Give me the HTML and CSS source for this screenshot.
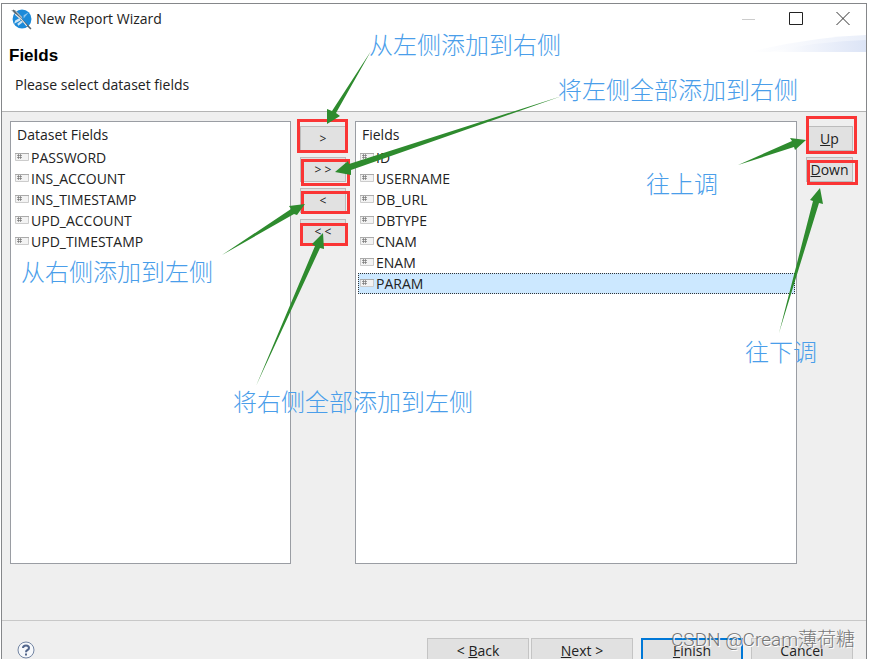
FILE: index.html
```
<!DOCTYPE html>
<html lang="en">
<head>
    <meta charset="UTF-8">
    <meta name="viewport" content="width=device-width, initial-scale=1.0">
    <title>New Report Wizard</title>

    <link rel="stylesheet" href="styles.css">
</head>
<body>

    <div class="wizard">
        <div class="title-bar">
            <svg class="logo" viewBox="0 0 20 20">
                <circle cx="10.500" cy="9.500" r="9" fill="#1c8ad9"/>
                <path d="M0 1L4 1L10 7L11 9L8 9z" fill="#a9b7c0"/>
                <path d="M9 8L4 11L3 14L9 11zM10 11L6 14L7 16L12 12z" fill="#cfe6f5"/>
                <path d="M17 3L12 6L12 9z" fill="#8fc6ee"/>
                <path d="M2 1L9 9L19 19" stroke="#55646e" stroke-width="1.500" fill="none"/>
                <path d="M4 5L10 10L15 16" stroke="#e8eef2" stroke-width="1" fill="none"/>
            </svg>
            <span class="title">New Report Wizard</span>
            <div class="window-buttons">
                <button aria-label="Minimize" disabled>
                    <svg viewBox="0 0 14 14"><path d="M0 7.500H13" stroke="#ccc"/></svg>
                </button>
                <button aria-label="Maximize">
                    <svg viewBox="0 0 14 14"><path d="M.5 .5H13.500V12.500H.5z" stroke="#222" fill="none"/></svg>
                </button>
                <button aria-label="Close">
                    <svg viewBox="0 0 14 14"><path d="M.5 0L13.500 13M13.500 0L.5 13" stroke="#333"/></svg>
                </button>
            </div>
        </div>

        <div class="header">
            <svg class="banner" viewBox="0 0 116 18">
                <defs>
                    <linearGradient id="fade">
                        <stop offset="0" stop-color="#fff"/>
                        <stop offset="1" stop-color="#dce4f6"/>
                    </linearGradient>
                </defs>
                <path d="M0 17Q60 2 116 0V17z" fill="url(#fade)" opacity=".6"/>
                <path d="M20 17Q70 6 116 5V17z" fill="url(#fade)"/>
            </svg>
            <h1>Fields</h1>
            <p>Please select dataset fields</p>
        </div>

        <div class="content">
            <div class="panel">
                <table id="dataset">
                    <thead><tr><th>Dataset Fields</th></tr></thead>
                    <tbody></tbody>
                </table>
            </div>

            <div class="buttons">
                <button>&gt;</button>
                <button>&gt; &gt;</button>
                <button>&lt;</button>
                <button>&lt; &lt;</button>
            </div>

            <div class="panel">
                <table id="fields">
                    <thead><tr><th>Fields</th></tr></thead>
                    <tbody></tbody>
                </table>
            </div>

            <div class="buttons order">
                <button><u>U</u>p</button>
                <button><u>D</u>own</button>
            </div>
        </div>

        <div class="footer">
            <button class="help" aria-label="Help">
                <svg viewBox="0 0 18 18">
                    <circle cx="9" cy="9" r="8" fill="#f6f8fb" stroke="#7385a3"/>
                    <path d="M6 7Q6 4.500 9 4.500T12 7Q12 8.300 10.500 9T9 11.300" stroke="#52668c" stroke-width="2" fill="none"/>
                    <path d="M8 12.500h2v2H8z" fill="#52668c"/>
                </svg>
            </button>
            <button class="nav">&lt; <u>B</u>ack</button>
            <button class="nav next"><u>N</u>ext &gt;</button>
            <button class="nav finish"><u>F</u>inish</button>
            <button class="nav">Cancel</button>
        </div>
    </div>

    <!-- notes drawn over the dialog -->
    <div class="notes">
        <svg width="870" height="659">
            <g class="boxes">
                <rect x="298.500" y="120.500" width="48" height="31"/>
                <rect x="302.500" y="160.500" width="46" height="24"/>
                <rect x="302.500" y="192.500" width="46" height="20"/>
                <rect x="301.500" y="224.500" width="45" height="20"/>
                <rect x="807.500" y="117.500" width="48" height="35"/>
                <rect x="808.500" y="161.500" width="48" height="22"/>
            </g>
            <g class="arrows">
                <path d="M371 51L336 113L340 116L327 124L327 109L332 111z"/>
                <path d="M562 96L351 170L351 175L335 172L348 161L349 164z"/>
                <path d="M222 255L291 209L289 206L305 204L297 215L294 214z"/>
                <path d="M256 386L315 246L312 244L323 233L324 249L320 248z"/>
                <path d="M738 165L792 141L790 138L806 140L795 150L794 147z"/>
                <path d="M779 333L813 201L810 200L820 188L823 204L819 203z"/>
            </g>
        </svg>
        <span class="note add">从左侧添加到右侧</span>
        <span class="note add-all">将左侧全部添加到右侧</span>
        <span class="note remove">从右侧添加到左侧</span>
        <span class="note remove-all">将右侧全部添加到左侧</span>
        <span class="note up">往上调</span>
        <span class="note down">往下调</span>
    </div>
    <div class="watermark">CSDN @Cream薄荷糖</div>

    <script>
        const datasetFields = ["PASSWORD", "INS_ACCOUNT", "INS_TIMESTAMP", "UPD_ACCOUNT", "UPD_TIMESTAMP"];
        const fields = ["ID", "USERNAME", "DB_URL", "DBTYPE", "CNAM", "ENAM", "PARAM"];

        const icon = `<svg class="icon" viewBox="0 0 14 10">
            <path d="M.5 1.500H13.500V8.500H.5z" fill="#f3f3f3" stroke="#ccc"/>
            <path d="M0 1.500H14" stroke="#aaa"/>
            <path d="M3.500 2V7M5.500 2V7M2 3.500H7M2 5.500H7" stroke="#777" stroke-width=".7"/>
        </svg>`;

        function loadRows(id, names, selected) {
            const body = document.querySelector(`#${id} tbody`);

            names.forEach(name => {
                const cls = name === selected ? ' class="selected"' : "";
                body.innerHTML += `<tr${cls}><td>${icon}${name}</td></tr>`;
            })
        }

        loadRows("dataset", datasetFields);
        loadRows("fields", fields, "PARAM");
    </script>

</body>
</html>
```
FILE: styles.css
```
* {
    margin: 0;
    padding: 0;
    box-sizing: border-box;
}

body {
    position: relative;
    height: 100vh;
    overflow: hidden;
    background-color: #fff;
    color: #222;
    font-family: "Open Sans", "Noto Sans CJK SC", sans-serif;
    font-size: 14px;
    line-height: 20px;
}

button {
    font: inherit;
    color: inherit;
}

.wizard {
    display: flex;
    flex-direction: column;
    height: calc(100vh - 3px);
    margin: 3px 3px 0 1px;
    border: 1px solid #85878a;
    border-bottom: none;
    background-color: #efefef;
}

.title-bar {
    display: flex;
    align-items: center;
    height: 30px;
    padding: 0 16px 0 9px;
    background-color: #fff;
}

.logo {
    width: 21px;
    height: 21px;
    margin-right: 4px;
}

.title {
    flex: 1;
}

.window-buttons {
    display: flex;
    gap: 33px;
}

.window-buttons button {
    width: 14px;
    height: 14px;
    border: none;
    background: none;
}

.window-buttons svg {
    display: block;
    overflow: visible;
}

.header {
    position: relative;
    height: 78px;
    padding: 12px 7px;
    background-color: #fff;
    border-bottom: 1px solid #b4b4b4;
}

.banner {
    position: absolute;
    top: 1px;
    right: 0;
    width: 116px;
    height: 18px;
}

h1 {
    font-family: "Liberation Sans", Arial, sans-serif;
    font-size: 17px;
    line-height: 20px;
    color: #000;
}

.header p {
    margin: 9px 6px;
}

.content {
    flex: 1;
    display: grid;
    grid-template-columns: 281fr 46px 442fr 47px;
    gap: 9px;
    padding: 9px 13px 56px 8px;
}

.panel {
    padding: 1px 1px 1px 2px;
    border: 1px solid #9a9da3;
    background-color: #fff;
}

table {
    width: 100%;
    border-collapse: collapse;
}

th {
    height: 24px;
    padding-left: 4px;
    font-weight: normal;
    text-align: left;
}

td {
    height: 21px;
    padding-left: 2px;
    line-height: 19px;
}

.icon {
    width: 14px;
    height: 10px;
    margin-right: 2px;
    vertical-align: 1px;
}

.selected {
    background-color: #cce8ff;
    outline: 1px dotted #333;
    outline-offset: -1px;
}

.buttons {
    display: flex;
    flex-direction: column;
    gap: 6px;
    padding-top: 5px;
}

.buttons button {
    height: 25px;
    border: 1px solid #bcbcbc;
    background-color: #e1e1e1;
    font-size: 12px;
    line-height: 22px;
}

.order button {
    font-size: 14px;
}

.footer {
    display: flex;
    flex: 0 0 39px;
    align-items: flex-start;
    padding: 17px 13px 0 15px;
    border-top: 1px solid #c8c8c8;
    overflow: hidden;
}

.help {
    width: 18px;
    height: 18px;
    margin-top: 3px;
    margin-right: auto;
    border: none;
    background: none;
}

.help svg {
    display: block;
}

.nav {
    flex: 0 0 102px;
    height: 26px;
    margin-left: 8px;
    border: 1px solid #c4c4c4;
    background-color: #e1e1e1;
}

.next {
    margin-left: 2px;
}

.finish {
    border: 2px solid #0078d7;
}

/* notes */
.notes {
    position: absolute;
    top: 0;
    left: 0;
    pointer-events: none;
}

.notes svg {
    display: block;
}

.boxes {
    fill: none;
    stroke: #fa3535;
    stroke-width: 3;
}

.arrows {
    fill: #2e8b2e;
}

.note {
    position: absolute;
    color: #4a9eea;
    font-family: "Noto Sans CJK SC", sans-serif;
    font-size: 24px;
    font-weight: 300;
    line-height: 26px;
    white-space: nowrap;
}

.add {
    left: 369px;
    top: 31px;
}

.add-all {
    left: 558px;
    top: 76px;
}

.remove {
    left: 21px;
    top: 258px;
}

.remove-all {
    left: 233px;
    top: 388px;
}

.up {
    left: 646px;
    top: 170px;
}

.down {
    left: 745px;
    top: 338px;
}

.watermark {
    position: absolute;
    right: 15px;
    bottom: 6px;
    color: #777;
    font-family: Roboto, "Noto Sans CJK SC", sans-serif;
    font-size: 19px;
    font-weight: 300;
    line-height: 26px;
    text-shadow: 1px 1px 0 #fff;
    white-space: nowrap;
}
```
